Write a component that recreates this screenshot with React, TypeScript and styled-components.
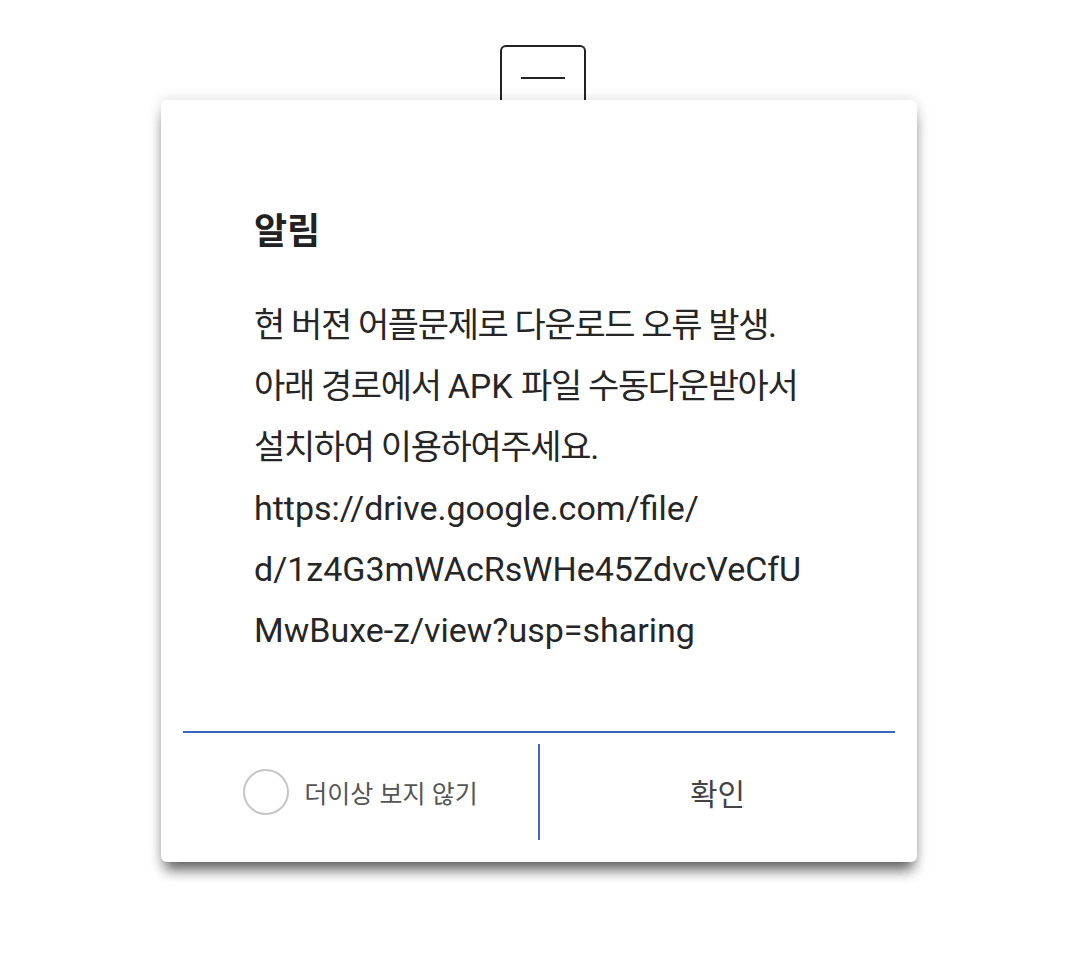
import styled, { createGlobalStyle } from 'styled-components';

const GlobalStyle = createGlobalStyle`
  body {
    margin: 0;
    background: #fff;
    font-family: Roboto, "Noto Sans CJK KR", sans-serif;
  }
`;

export default function App() {
  return (
    <>
      <GlobalStyle />
      <Stage>
        <Tab>
          <Dash />
        </Tab>
        <Dialog>
          <Content>
            <Title>알림</Title>
            <Body>
              <Line><Ko>현 버젼 어플문제로 다운로드 오류 발생.</Ko></Line>
              <Line><Ko>아래 경로에서 </Ko>APK <Ko>파일 수동다운받아서</Ko></Line>
              <Line><Ko>설치하여 이용하여주세요.</Ko></Line>
              <Line>https://drive.google.com/file/</Line>
              <Line>d/1z4G3mWAcRsWHe45ZdvcVeCfU</Line>
              <Line>MwBuxe-z/view?usp=sharing</Line>
            </Body>
          </Content>
          <Divider />
          <Footer>
            <FooterButton>
              <Radio />
              <Label>더이상 보지 않기</Label>
            </FooterButton>
            <Separator />
            <FooterButton>
              <Confirm>확인</Confirm>
            </FooterButton>
          </Footer>
        </Dialog>
      </Stage>
    </>
  );
}

const Stage = styled.div`
  height: 883px;
  overflow: hidden;
  box-sizing: border-box;
  padding-top: 45px;
  display: flex;
  flex-direction: column;
  align-items: center;
`;

const Tab = styled.div`
  width: 86px;
  height: 70px;
  box-sizing: border-box;
  margin-left: 6px;
  border: 2px solid #222;
  border-bottom: none;
  border-radius: 6px 6px 0 0;
  display: flex;
  justify-content: center;
  padding-top: 30px;
`;

const Dash = styled.div`
  width: 44px;
  height: 2px;
  background: #222;
`;

const Dialog = styled.div`
  position: relative;
  z-index: 1;
  margin-top: -15px;
  margin-right: 2px;
  width: 756px;
  height: 762px;
  flex-shrink: 0;
  background: #fff;
  border-radius: 6px;
  display: flex;
  flex-direction: column;
  box-shadow: 0 12px 14px -4px rgba(0, 0, 0, 0.6), 0 0 14px rgba(0, 0, 0, 0.14);
`;

const Content = styled.div`
  flex: 1;
  padding: 111px 60px 0 93px;
`;

const Title = styled.h2`
  margin: 0 0 41px;
  font-size: 36px;
  line-height: 43px;
  font-weight: 700;
  color: #222;
`;

const Body = styled.div`
  font-size: 34px;
  line-height: 61px;
  color: #262626;
`;

const Line = styled.div`
  white-space: nowrap;
`;

const Ko = styled.span`
  letter-spacing: -0.04em;
`;

const Divider = styled.div`
  margin: 0 22px;
  height: 2px;
  background: #3d62bf;
`;

const Footer = styled.div`
  display: flex;
  align-items: center;
  padding: 11px 22px 22px;
`;

const FooterButton = styled.div`
  flex: 1;
  height: 96px;
  display: flex;
  align-items: center;
  justify-content: center;
  gap: 15px;
`;

const Separator = styled.div`
  width: 2px;
  height: 96px;
  background: #4466c8;
`;

const Radio = styled.span`
  width: 46px;
  height: 46px;
  box-sizing: border-box;
  border: 2px solid #c6c6c6;
  border-radius: 50%;
`;

const Label = styled.span`
  font-size: 25px;
  color: #555;
`;

const Confirm = styled.span`
  font-size: 30px;
  color: #444;
`;
